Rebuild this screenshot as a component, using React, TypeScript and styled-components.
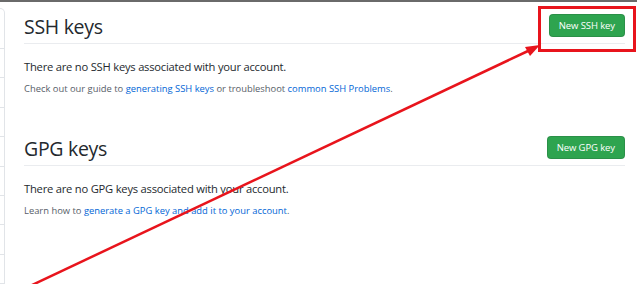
import styled, { createGlobalStyle } from 'styled-components';

const GlobalStyle = createGlobalStyle`
    html, body {
        margin: 0;
        padding: 0;
        background: #fff;
    }
    body {
        font-family: 'Open Sans', 'Noto Sans', sans-serif;
        color: #24292e;
    }
`;

const Page = styled.div`
    position: relative;
    width: 637px;
    height: 284px;
    overflow: hidden;
    border-top: 2px solid #6a6a6a;
    box-sizing: border-box;
    display: flex;
`;

const Sidebar = styled.nav`
    width: 4px;
    margin-top: 6px;
    border: 1px solid #e1e4e8;
    border-left: none;
    border-top-right-radius: 6px;
    display: flex;
    flex-direction: column;
    padding-top: 39px;
`;

const SidebarRow = styled.div`
    height: 30px;
    border-top: 1px solid #e1e4e8;
`;

const Main = styled.main`
    flex: 1;
    padding: 0 12px 0 19px;
`;

const Section = styled.section<{ $first?: boolean }>`
    margin-top: ${(p) => (p.$first ? '7px' : '35px')};
`;

const Header = styled.div`
    display: flex;
    align-items: center;
    justify-content: space-between;
    height: 34px;
    border-bottom: 1px solid #eaecef;
`;

const Title = styled.h2`
    margin: 0;
    font-size: 19.5px;
    font-weight: 400;
    letter-spacing: -0.3px;
    color: #24292e;
`;

const GreenButton = styled.button`
    height: 23px;
    padding: 0 9px;
    margin-top: -1px;
    border: 1px solid rgba(27, 31, 35, 0.15);
    border-radius: 4px;
    background: #2ea44f;
    color: #fff;
    font-family: inherit;
    font-size: 9.5px;
    font-weight: 500;
    letter-spacing: -0.1px;
    cursor: pointer;
`;

const Lead = styled.p`
    margin: 15px 0 0;
    font-size: 11.2px;
    line-height: 16px;
    letter-spacing: -0.22px;
`;

const Note = styled.p`
    margin: 7px 0 0;
    font-size: 9.4px;
    line-height: 14px;
    letter-spacing: 0;
    color: #586069;
`;

const Link = styled.a`
    color: #0366d6;
    text-decoration: none;
`;

const Overlay = styled.svg`
    position: absolute;
    left: 0;
    top: -2px;
    pointer-events: none;
`;

export default function App() {
    return (
        <>
            <GlobalStyle />
            <Page>
                <Sidebar>
                    {Array.from({ length: 8 }).map((_, i) => (
                        // eslint-disable-next-line react/no-array-index-key
                        <SidebarRow key={i} />
                    ))}
                </Sidebar>
                <Main>
                    <Section $first>
                        <Header>
                            <Title>SSH keys</Title>
                            <GreenButton>New SSH key</GreenButton>
                        </Header>
                        <Lead>There are no SSH keys associated with your account.</Lead>
                        <Note>
                            Check out our guide to <Link href="#">generating SSH keys</Link> or
                            troubleshoot <Link href="#">common SSH Problems</Link>.
                        </Note>
                    </Section>
                    <Section>
                        <Header>
                            <Title>GPG keys</Title>
                            <GreenButton>New GPG key</GreenButton>
                        </Header>
                        <Lead>There are no GPG keys associated with your account.</Lead>
                        <Note>
                            Learn how to{' '}
                            <Link href="#">generate a GPG key and add it to your account</Link>.
                        </Note>
                    </Section>
                </Main>

                {/* annotation drawn over the page */}
                <Overlay width="637" height="284" viewBox="0 0 637 284">
                    <rect x="539.5" y="7.5" width="95" height="43" fill="none" stroke="#e8141c" strokeWidth="3" />
                    <line x1="30" y1="286" x2="528" y2="51" stroke="#e8141c" strokeWidth="2.5" />
                    <polygon points="540,45 525,47 530,56" fill="#e8141c" />
                </Overlay>
            </Page>
        </>
    );
}
